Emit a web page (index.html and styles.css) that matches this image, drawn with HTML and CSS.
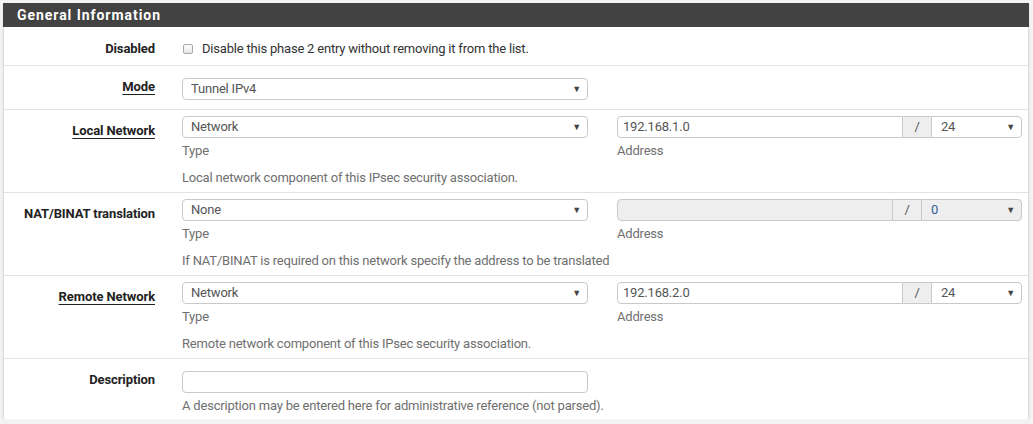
FILE: index.html
```html
<!DOCTYPE html>
<html>
<head>
<meta charset="utf-8">
<link rel="stylesheet" href="styles.css">
</head>
<body>
<div class="panel">
  <div class="panel-heading">General Information</div>
  <div class="panel-body">
    <div class="row row-single">
      <div class="lbl">Disabled</div>
      <div class="ctl">
        <label class="check"><span class="box"></span>Disable this phase 2 entry without removing it from the list.</label>
      </div>
    </div>
    <div class="row row-short">
      <div class="lbl"><span class="u">Mode</span></div>
      <div class="ctl half">
        <div class="sel"><span class="val">Tunnel IPv4</span><span class="arrow">▼</span></div>
      </div>
    </div>
    <div class="row row-split">
      <div class="lbl"><span class="u">Local Network</span></div>
      <div class="ctl">
        <div class="split">
          <div class="col">
            <div class="sel"><span class="val">Network</span><span class="arrow">▼</span></div>
            <div class="sub">Type</div>
          </div>
          <div class="col">
            <div class="igroup">
              <div class="inp">192.168.1.0</div>
              <div class="addon">/</div>
              <div class="sel mask"><span class="val">24</span><span class="arrow">▼</span></div>
            </div>
            <div class="sub">Address</div>
          </div>
        </div>
        <div class="help">Local network component of this IPsec security association.</div>
      </div>
    </div>
    <div class="row row-split">
      <div class="lbl">NAT/BINAT translation</div>
      <div class="ctl">
        <div class="split">
          <div class="col">
            <div class="sel"><span class="val">None</span><span class="arrow">▼</span></div>
            <div class="sub">Type</div>
          </div>
          <div class="col">
            <div class="igroup">
              <div class="inp disabled"></div>
              <div class="addon">/</div>
              <div class="sel mask wide disabled"><span class="val blue">0</span><span class="arrow">▼</span></div>
            </div>
            <div class="sub">Address</div>
          </div>
        </div>
        <div class="help">If NAT/BINAT is required on this network specify the address to be translated</div>
      </div>
    </div>
    <div class="row row-split">
      <div class="lbl"><span class="u">Remote Network</span></div>
      <div class="ctl">
        <div class="split">
          <div class="col">
            <div class="sel"><span class="val">Network</span><span class="arrow">▼</span></div>
            <div class="sub">Type</div>
          </div>
          <div class="col">
            <div class="igroup">
              <div class="inp">192.168.2.0</div>
              <div class="addon">/</div>
              <div class="sel mask"><span class="val">24</span><span class="arrow">▼</span></div>
            </div>
            <div class="sub">Address</div>
          </div>
        </div>
        <div class="help">Remote network component of this IPsec security association.</div>
      </div>
    </div>
    <div class="row row-last">
      <div class="lbl">Description</div>
      <div class="ctl half">
        <div class="inp full"></div>
        <div class="help tight">A description may be entered here for administrative reference (not parsed).</div>
      </div>
    </div>
  </div>
</div>
</body>
</html>
```
FILE: styles.css
```css
* { box-sizing: border-box; }
html, body { margin: 0; }
body {
  background: #f3f3f3;
  font-family: Roboto, "Liberation Sans", sans-serif;
  font-size: 13px;
  letter-spacing: -0.2px;
  color: #333;
  padding: 3px 4px 0 3px;
}
.panel {
  width: 1026px;
  background: #fff;
  box-shadow: 0 1px 2px rgba(0,0,0,0.12);
}
.panel-heading {
  height: 24px;
  background: #424242;
  color: #fff;
  font-weight: bold;
  font-size: 14px;
  line-height: 24px;
  padding-left: 14px;
  letter-spacing: 0.95px;
}
.panel-body {
  border-left: 1px solid #dcdcdc;
  border-right: 1px solid #dcdcdc;
}
.row {
  display: grid;
  grid-template-columns: 166px 1fr;
  column-gap: 12px;
  padding-top: 11px;
  border-bottom: 1px solid #e3e3e3;
}
.row-single { padding-top: 12px; padding-bottom: 6px; }
.row-short { padding-bottom: 9px; }
.row-split { padding-bottom: 4px; }
.row-last { padding-bottom: 3px; border-bottom: none; }
.lbl {
  text-align: right;
  padding-right: 15px;
  font-weight: bold;
  line-height: 20px;
  color: #222;
  letter-spacing: -0.1px;
}
.u { text-decoration: underline; text-underline-offset: 3px; }
.ctl { padding-right: 6px; }
.ctl.half { width: 406px; padding-right: 0; }
.check { display: flex; align-items: center; line-height: 20px; color: #333; }
.box {
  width: 10px; height: 10px;
  border: 1px solid #a9a9a9;
  border-radius: 2px;
  background: linear-gradient(#fdfdfd, #e6e6e6);
  margin: 0 9px 0 1px;
}
.row-short .sel { margin-top: 1px; }
.sel {
  position: relative;
  height: 22px;
  border: 1px solid #c9c9c9;
  border-radius: 4px;
  background: #fff;
  color: #555;
  line-height: 20px;
  padding-left: 8px;
}
.sel .arrow {
  position: absolute;
  right: 6px;
  top: 0;
  font-size: 9px;
  color: #444;
  line-height: 20px;
}
.sel.disabled, .inp.disabled { background: #eee; }
.blue { color: #2d5f97; }
.split {
  display: grid;
  grid-template-columns: 406px 405px;
  column-gap: 29px;
  margin-top: -5px;
}
.sub { margin-top: 3px; line-height: 20px; color: #6f6f6f; }
.help { margin-top: 7px; line-height: 20px; color: #6f6f6f; white-space: nowrap; }
.help.tight { margin-top: 3px; }
.igroup { display: flex; height: 22px; }
.inp {
  height: 22px;
  border: 1px solid #c9c9c9;
  background: #fff;
  color: #555;
  line-height: 20px;
  padding-left: 5px;
}
.igroup .inp {
  flex: 1;
  border-radius: 4px 0 0 4px;
}
.inp.full { border-radius: 4px; margin-top: 1px; }
.addon {
  width: 28px;
  height: 22px;
  border: 1px solid #c9c9c9;
  border-left: none;
  border-right: none;
  background: #eee;
  color: #555;
  text-align: center;
  line-height: 20px;
}
.igroup .sel {
  border-radius: 0 4px 4px 0;
  padding-left: 9px;
}
.mask { width: 91px; }
.mask.wide { width: 101px; }
```
